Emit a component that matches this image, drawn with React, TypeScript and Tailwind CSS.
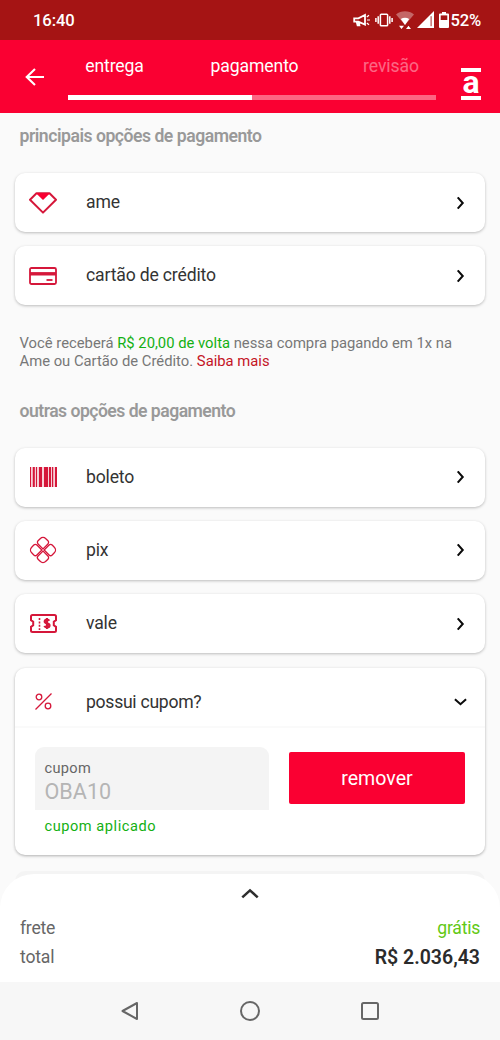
import { useState } from 'react'
import type { ReactNode } from 'react'

const RED = '#d5173a'

const STEPS = [
  { label: 'entrega', done: true },
  { label: 'pagamento', done: true },
  { label: 'revisão', done: false },
]

function StatusBar() {
  return (
    <div className="flex h-10 items-center justify-between bg-[#a51414] pr-[19px] pl-[33px] text-white">
      <span className="pt-0.5 text-[16.6px] font-medium tracking-[-0.1px]">16:40</span>
      <div className="flex items-center">
        <svg className="mr-1 h-[14px] w-[18px]" viewBox="0 0 18 14" fill="none" stroke="white" strokeWidth="1.8">
          <path d="M1.2 5.3h4.2L12 2v9.5L5.4 8.6H1.2z M3.6 8.6l1 3.8h1.8l-.8-3.6" />
          <path d="M14 7h3 M13.8 4l2.2-1.8 M13.8 10l2.2 1.8" strokeWidth="1.2" />
        </svg>
        <svg className="mr-[3px] h-[14px] w-[18px]" viewBox="0 0 18 14" fill="none" stroke="white" strokeWidth="1.5">
          <rect x="5.4" y="1.2" width="7.2" height="11.6" rx="0.8" />
          <path d="M3.2 3.2v7.6 M14.8 3.2v7.6 M.9 5v4 M17.1 5v4" />
        </svg>
        <svg className="mr-[3px] h-5 w-[18px]" viewBox="0 0 18 20">
          <path d="M0 4.6C5 .2 13 .2 18 4.6L9 15z" fill="white" fillOpacity="0.35" />
          <path d="M4.8 9c2.6-1.8 5.8-1.8 8.4 0L9 15z M3 15.8h5L5.5 19z M10 19h5l-2.5-3.2z" fill="white" />
        </svg>
        <svg className="mr-[5px] h-[17px] w-[17px]" viewBox="0 0 17 17">
          <path d="M0 17 17 0v17z" fill="white" />
          <path d="M14.1 5.2v10" stroke="#a51414" strokeWidth="0.9" />
        </svg>
        <svg className="mr-[2px] h-4 w-[10px]" viewBox="0 0 10 16">
          <path d="M3 0h4v1.6h2a1 1 0 0 1 1 1V15a1 1 0 0 1-1 1H1a1 1 0 0 1-1-1V2.6a1 1 0 0 1 1-1h2z" fill="white" />
          <path d="M1.7 3.4h6.6V8H1.7z" fill="#a51414" />
        </svg>
        <span className="pt-0.5 text-[16.6px] font-medium tracking-[-0.2px]">52%</span>
      </div>
    </div>
  )
}

function Header() {
  return (
    <header className="flex h-[73px] bg-[#fa0032] text-white">
      <button className="flex w-[68px] items-center pl-[25px]">
        <svg className="h-[18px] w-[19px]" viewBox="0 0 19 18" fill="none" stroke="white" strokeWidth="2.1">
          <path d="M19 9H1.6 M10 .9 1.7 9 10 17.1" />
        </svg>
      </button>
      <div className="flex w-[368px] flex-col pt-[14px]">
        <div className="flex h-6 items-center text-[17.6px] tracking-[-0.1px]">
          <span className="w-[93px] text-center">{STEPS[0].label}</span>
          <span className="flex-1 pl-[2px] text-center">{STEPS[1].label}</span>
          <span className="w-[90px] text-center opacity-40">{STEPS[2].label}</span>
        </div>
        <div className="mt-[17px] h-[5px] bg-[#fd6683]">
          <div className="h-full w-1/2 bg-white" />
        </div>
      </div>
      <div className="flex flex-1 flex-col items-center pt-7 pl-[6px]">
        <div className="h-[3.5px] w-5 bg-white" />
        <span className="flex h-[24.5px] items-center pb-[3px] text-[32px] leading-none font-bold">a</span>
        <div className="h-[3.5px] w-5 bg-white" />
      </div>
    </header>
  )
}

function AmeIcon() {
  return (
    <svg className="h-[22px] w-7" viewBox="0 0 28 22" fill="none" stroke={RED} strokeWidth="2" strokeLinejoin="round">
      <path d="M7.5 1.2h13L27 7.8 14 20.6 1 7.8z" />
      <path d="M7 1.2h14L14 8z" fill="#fa0032" stroke="none" />
    </svg>
  )
}

function CardIcon() {
  return (
    <svg className="h-[18px] w-7" viewBox="0 0 28 18" fill="none" stroke={RED} strokeWidth="1.8">
      <rect x="1" y="1" width="26" height="16" rx="1.5" />
      <path d="M1 6.8h26" strokeWidth="3.4" />
      <path d="M17.5 13h6" strokeWidth="1.8" />
    </svg>
  )
}

function BarcodeIcon() {
  const bars = [
    [0, 1], [2.8, 2], [6, 1], [9, 3], [14, 4], [19, 2], [22, 1.2], [25, 2],
  ]
  return (
    <svg className="h-5 w-[27px]" viewBox="0 0 27 20" fill={RED}>
      {bars.map(([x, w]) => (
        <rect key={x} x={x} y="0" width={w} height="20" />
      ))}
      <rect x="0" y="0" width="27" height="20" fillOpacity="0.2" />
    </svg>
  )
}

function PixIcon() {
  return (
    <svg className="h-7 w-7" viewBox="0 0 28 28" fill="none" stroke={RED} strokeWidth="1.3">
      <g transform="rotate(45 14 14)">
        <path d="M4 8a4 4 0 0 1 4-4h3a2.2 2.2 0 0 1 2.2 2.2v7H6.2A2.2 2.2 0 0 1 4 11z" />
        <path d="M20 4a4 4 0 0 1 4 4v3a2.2 2.2 0 0 1-2.2 2.2h-7v-7A2.2 2.2 0 0 1 17 4z" />
        <path d="M8 24a4 4 0 0 1-4-4v-3a2.2 2.2 0 0 1 2.2-2.2h7v7A2.2 2.2 0 0 1 11 24z" />
        <path d="M24 20a4 4 0 0 1-4 4h-3a2.2 2.2 0 0 1-2.2-2.2v-7h7A2.2 2.2 0 0 1 24 17z" />
      </g>
    </svg>
  )
}

function VoucherIcon() {
  return (
    <svg className="h-[19px] w-[27px]" viewBox="0 0 27 19" fill="none" stroke={RED} strokeWidth="2">
      <path d="M1 2.5A1.5 1.5 0 0 1 2.5 1h22A1.5 1.5 0 0 1 26 2.5v3.7l-2.2 1.5v3.6l2.2 1.5v3.7a1.5 1.5 0 0 1-1.5 1.5h-22A1.5 1.5 0 0 1 1 16.5v-3.7l2.2-1.5V7.7L1 6.2z" />
      <path d="M9.5 4v12" strokeWidth="1.6" strokeDasharray="2 1.4" />
      <path d="M19.3 6.8c-.5-.9-1.3-1.2-2.3-1.2-1.4 0-2.3.7-2.3 1.8 0 2.7 4.8 1.3 4.8 4 0 1.2-1 1.9-2.5 1.9-1.2 0-2.2-.4-2.6-1.4 M17 4v11" strokeWidth="2.2" />
    </svg>
  )
}

function PercentIcon() {
  return (
    <svg className="h-[17px] w-[17px]" viewBox="0 0 17 17" fill="none" stroke={RED} strokeWidth="1.3">
      <path d="M.5 16.5 16.5.5" />
      <circle cx="4" cy="4" r="2.8" />
      <circle cx="13" cy="13" r="2.8" />
    </svg>
  )
}

function Chevron({ className, color = '#0a0a0a', width = 2.2 }: { className: string; color?: string; width?: number }) {
  return (
    <svg className={className} viewBox="0 0 14 8" fill="none" stroke={color} strokeWidth={width}>
      <path d="M1 1l6 5.4L13 1" />
    </svg>
  )
}

function OptionCard({ icon, label }: { icon: ReactNode; label: string }) {
  return (
    <button className="flex h-[59px] w-full items-center rounded-[10px] bg-white pr-[17.5px] text-left shadow-[0_1px_3px_rgba(0,0,0,0.25)]">
      <span className="flex w-14 justify-center">{icon}</span>
      <span className="flex-1 pl-[15px] text-[17.6px] tracking-[-0.17px] text-[#333]">{label}</span>
      <Chevron className="h-[8px] w-[13px] -rotate-90" />
    </button>
  )
}

function CouponCard() {
  const [coupon, setCoupon] = useState('OBA10')

  return (
    <div className="mt-[0.75px] h-[187px] rounded-[10px] bg-white shadow-[0_1px_3px_rgba(0,0,0,0.3)]">
      <div className="flex h-[60px] items-center border-b-2 border-[#fafafa] pt-[9.5px] pr-[17.5px]">
        <span className="flex w-14 justify-center">
          <PercentIcon />
        </span>
        <span className="flex-1 pl-[15px] text-[17.6px] tracking-[-0.28px] text-[#333]">possui cupom?</span>
        <Chevron className="h-[8px] w-[13px]" />
      </div>
      <div className="flex items-start justify-between px-[19.5px] pt-[19px]">
        <div className="w-[234.5px]">
          <div className="h-[63px] rounded-t-[9px] bg-[#f4f4f4] px-[10px] pt-[10.5px]">
            <div className="text-[14.6px] leading-5 tracking-[0.3px] text-[#666]">cupom</div>
            <div className="text-[21.6px] leading-7 text-[#b5b5b5]">{coupon}</div>
          </div>
          <div className="pt-[6px] pl-[10px] text-[14.6px] leading-5 tracking-[0.54px] text-[#13b013]">cupom aplicado</div>
        </div>
        <button
          onClick={() => setCoupon('')}
          className="mt-[5px] h-[52px] w-[176px] rounded-[2px] bg-[#fa0032] pt-0.5 text-[19.6px] text-white"
        >
          remover
        </button>
      </div>
    </div>
  )
}

function Summary() {
  return (
    <section className="relative -mt-[30px] h-[108px] rounded-t-[34px] bg-white px-5 pt-[14px]">
      <div className="flex justify-center">
        <Chevron className="h-[11px] w-[18px] rotate-180" color="#2e2e2e" width={2} />
      </div>
      <div className="mt-[14px] flex h-[30px] items-center justify-between text-[17.6px] tracking-[-0.25px]">
        <span className="text-[#666]">frete</span>
        <span className="text-[#62c914]">grátis</span>
      </div>
      <div className="flex h-[28px] items-center justify-between">
        <span className="text-[17.6px] tracking-[-0.17px] text-[#666]">total</span>
        <span className="pt-px text-[19.5px] font-semibold text-[#2b2b2b]">R$ 2.036,43</span>
      </div>
    </section>
  )
}

function NavBar() {
  return (
    <nav className="flex h-[58px] items-center justify-between bg-[#f7f7f7] px-[120px]">
      <svg className="h-5 w-5" viewBox="0 0 20 20" fill="none" stroke="#666" strokeWidth="2" strokeLinejoin="round">
        <path d="M17 2v16L2.5 10z" />
      </svg>
      <svg className="h-5 w-5" viewBox="0 0 20 20" fill="none" stroke="#666" strokeWidth="2">
        <circle cx="10" cy="10" r="9" />
      </svg>
      <svg className="h-5 w-5" viewBox="0 0 20 20" fill="none" stroke="#666" strokeWidth="2">
        <rect x="2" y="2" width="16" height="16" rx="1.5" />
      </svg>
    </nav>
  )
}

export default function App() {
  return (
    <div className="flex h-[1040px] w-[500px] flex-col overflow-hidden bg-[#fafafa] font-[Roboto,sans-serif]">
      <StatusBar />
      <Header />
      <main className="h-[791px] overflow-hidden pt-[11px] pr-[15.5px] pl-[15px]">
        <h2 className="pl-[4.5px] text-[17.6px] leading-6 font-semibold tracking-[-0.48px] text-[#999]">principais opções de pagamento</h2>
        <div className="mt-[25px] flex flex-col gap-[14px]">
          <OptionCard icon={<AmeIcon />} label="ame" />
          <OptionCard icon={<CardIcon />} label="cartão de crédito" />
        </div>
        <p className="mt-[28.5px] pl-[4.5px] text-[14.8px] leading-[18px] text-[#777]">
          Você receberá <span className="text-[#13b013]">R$ 20,00 de volta</span> nessa compra pagando em 1x na
          <br />
          Ame ou Cartão de Crédito. <span className="text-[#c41425]">Saiba mais</span>
        </p>
        <h2 className="mt-[29.5px] pl-[4.5px] text-[17.6px] leading-6 font-semibold tracking-[-0.52px] text-[#999]">outras opções de pagamento</h2>
        <div className="mt-[24.5px] flex flex-col gap-[14.25px]">
          <OptionCard icon={<BarcodeIcon />} label="boleto" />
          <OptionCard icon={<PixIcon />} label="pix" />
          <OptionCard icon={<VoucherIcon />} label="vale" />
          <CouponCard />
          <div className="mt-[2px] h-[59px] shrink-0 rounded-[10px] bg-[#f4f4f4]" />
        </div>
      </main>
      <Summary />
      <NavBar />
    </div>
  )
}
